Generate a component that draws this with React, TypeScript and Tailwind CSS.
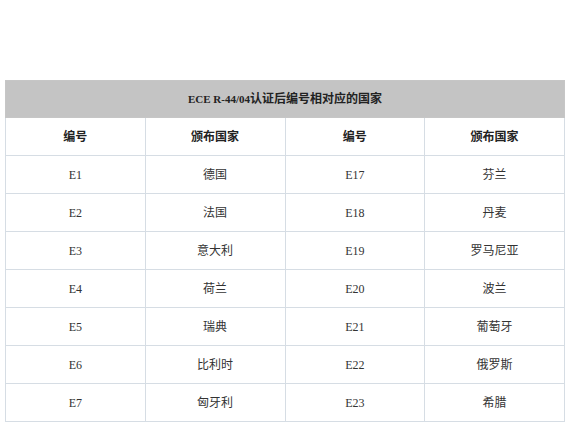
const rows: [string, string, string, string][] = [
  ['E1', '德国', 'E17', '芬兰'],
  ['E2', '法国', 'E18', '丹麦'],
  ['E3', '意大利', 'E19', '罗马尼亚'],
  ['E4', '荷兰', 'E20', '波兰'],
  ['E5', '瑞典', 'E21', '葡萄牙'],
  ['E6', '比利时', 'E22', '俄罗斯'],
  ['E7', '匈牙利', 'E23', '希腊'],
]

const cell = 'h-[38px] w-[140px] border border-[#d6dde4] p-0 text-center align-middle'

export default function App() {
  return (
    <div
      className="h-[425px] w-[566px] overflow-hidden bg-white pt-[80px] pl-[5px] text-[12px] text-[#333]"
      style={{ fontFamily: '"Liberation Serif", "Noto Sans CJK SC", serif' }}
    >
      <table className="w-[560px] table-fixed border-collapse">
        <thead>
          <tr>
            <th colSpan={4} className="h-[37px] border border-[#c6c6c6] bg-[#c4c4c4] text-center font-bold text-[#222]">
              <span className="text-[11px]">ECE R-44/04</span>认证后编号相对应的国家
            </th>
          </tr>
          <tr>
            <th className={`${cell} font-bold text-[#222]`}>编号</th>
            <th className={`${cell} font-bold text-[#222]`}>颁布国家</th>
            <th className={`${cell} font-bold text-[#222]`}>编号</th>
            <th className={`${cell} font-bold text-[#222]`}>颁布国家</th>
          </tr>
        </thead>
        <tbody>
          {rows.map((r) => (
            <tr key={r[0]}>
              {r.map((v, i) => (
                <td key={i} className={cell}>
                  {v}
                </td>
              ))}
            </tr>
          ))}
        </tbody>
      </table>
    </div>
  )
}
